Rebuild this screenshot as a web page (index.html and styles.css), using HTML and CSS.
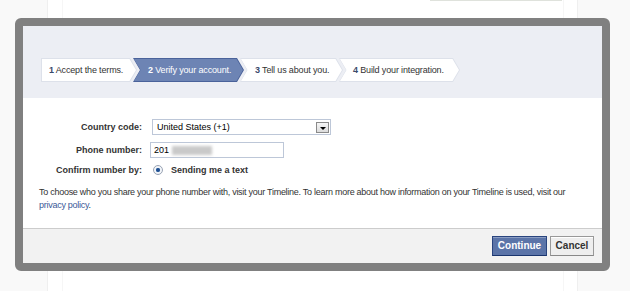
FILE: index.html
```html
<!DOCTYPE html>
<html lang="en">
<head>
<meta charset="utf-8">
<title>Verify your account</title>
<link rel="stylesheet" href="styles.css">
</head>
<body>
<div class="page">
  <div class="topbar"><span class="topbox"></span></div>
  <div class="dialog">
    <div class="dlg-head">
      <ol class="steps">
        <li class="step step-1"><span class="step-text"><b>1</b> Accept the terms.</span></li>
        <li class="step step-2 active"><span class="step-text"><b>2</b> Verify your account.</span></li>
        <li class="step step-3"><span class="step-text"><b>3</b> Tell us about you.</span></li>
        <li class="step step-4"><span class="step-text"><b>4</b> Build your integration.</span></li>
      </ol>
    </div>
    <div class="dlg-body">
      <div class="form">
        <label class="lbl">Country code:</label>
        <div class="ctl"><div class="select"><span class="select-val">United States (+1)</span><span class="select-btn"><span class="tri"></span></span></div></div>
        <label class="lbl">Phone number:</label>
        <div class="ctl"><div class="input">201<span class="blur"></span></div></div>
        <label class="lbl">Confirm number by:</label>
        <div class="ctl"><span class="radio"><span class="radio-dot"></span></span><span class="radio-lbl">Sending me a text</span></div>
      </div>
      <p class="note">To choose who you share your phone number with, visit your Timeline. To learn more about how information on your Timeline is used, visit our <a class="link" href="#">privacy policy</a>.</p>
    </div>
    <div class="dlg-foot">
      <button class="btn btn-primary">Continue</button>
      <button class="btn btn-cancel">Cancel</button>
    </div>
  </div>
</div>
</body>
</html>
```

FILE: styles.css
```css
html, body {
  margin: 0;
  padding: 0;
}
body {
  width: 630px;
  height: 291px;
  overflow: hidden;
  font-family: "Liberation Sans", Arial, sans-serif;
  font-size: 9px;
  color: #333;
  background:
    linear-gradient(to right, transparent 47px, #efefef 47px, #efefef 48px, transparent 48px, transparent 62px, #f6f6f6 62px, #f6f6f6 63px, transparent 63px, transparent 563px, #f6f6f6 563px, #f6f6f6 564px, transparent 564px, transparent 577px, #efefef 577px, #efefef 578px, transparent 578px),
    linear-gradient(to right, #f9f9f9 47px, #ffffff 47px, #ffffff 578px, #f9f9f9 578px);
}
.page {
  display: flex;
  flex-direction: column;
}
.topbar {
  height: 2px;
  display: flex;
  padding-left: 430px;
}
.topbox {
  width: 132px;
  height: 1px;
  background: #dfe2dc;
}
.dialog {
  margin: 16px 0 0 15px;
  width: 579px;
  border: 8px solid #808080;
  border-radius: 6px;
  display: flex;
  flex-direction: column;
  background: #fff;
}
.dlg-head {
  background: #eceef4;
  height: 72px;
  box-sizing: border-box;
  padding: 32px 0 0 18px;
}
.steps {
  list-style: none;
  margin: 0;
  padding: 0;
  display: flex;
}
.step {
  position: relative;
  height: 24px;
  display: flex;
  align-items: center;
  background: #dde1ea;
  clip-path: polygon(0 0, calc(100% - 7px) 0, 100% 50%, calc(100% - 7px) 100%, 0 100%, 7px 50%);
  margin-left: -4px;
  box-sizing: border-box;
  letter-spacing: -0.15px;
}
.step::before {
  content: "";
  position: absolute;
  inset: 1px 1px;
  background: #fff;
  clip-path: polygon(0 0, calc(100% - 6.5px) 0, 100% 50%, calc(100% - 6.5px) 100%, 0 100%, 6.5px 50%);
}
.step-text {
  position: relative;
  white-space: nowrap;
}
.step b {
  color: #3b4a6b;
}
.step-1 {
  margin-left: 0;
  width: 96px;
  padding-left: 8px;
  clip-path: polygon(0 0, calc(100% - 7px) 0, 100% 50%, calc(100% - 7px) 100%, 0 100%);
}
.step-1::before {
  clip-path: polygon(0 0, calc(100% - 6.5px) 0, 100% 50%, calc(100% - 6.5px) 100%, 0 100%);
}
.step-2 { width: 111px; padding-left: 15px; }
.step-3 { width: 103px; padding-left: 15px; }
.step-4 { width: 121px; padding-left: 14px; }
.step.active {
  background: #4a629a;
}
.step.active::before {
  background: #6d84b4;
}
.step.active .step-text,
.step.active b {
  color: #fff;
}
.dlg-body {
  padding: 21px 12px 16px 16px;
  display: flex;
  flex-direction: column;
}
.form {
  display: grid;
  grid-template-columns: 103px auto;
  column-gap: 8px;
  row-gap: 7px;
  align-items: center;
}
.lbl {
  font-weight: bold;
  text-align: right;
  color: #333;
  white-space: nowrap;
}
.ctl {
  display: flex;
  align-items: center;
}
.select {
  margin-left: 2px;
  width: 179px;
  height: 16px;
  box-sizing: border-box;
  border: 1px solid #bdc7d8;
  display: flex;
  align-items: center;
  justify-content: space-between;
  padding: 0 1px 0 4px;
  color: #000;
}
.select-btn {
  width: 13px;
  height: 11px;
  box-sizing: border-box;
  border: 1px solid #8a8a8a;
  background: linear-gradient(#f6f6f6, #dcdcdc);
  display: flex;
  align-items: center;
  justify-content: center;
}
.tri {
  width: 0;
  height: 0;
  border-left: 3px solid transparent;
  border-right: 3px solid transparent;
  border-top: 3px solid #000;
  margin-top: 2px;
}
.input {
  width: 134px;
  height: 16px;
  box-sizing: border-box;
  border: 1px solid #bdc7d8;
  display: flex;
  align-items: center;
  padding-left: 3px;
  color: #000;
}
.blur {
  display: inline-block;
  width: 40px;
  height: 9px;
  margin-left: 3px;
  background: #c9c9c9;
  filter: blur(1.5px);
}
.radio {
  width: 10px;
  height: 10px;
  box-sizing: border-box;
  border-radius: 50%;
  border: 1px solid #9aa4b5;
  background: radial-gradient(circle, #fff 40%, #dfe4ec 100%);
  display: flex;
  align-items: center;
  justify-content: center;
  margin-left: 3px;
}
.radio-dot {
  width: 4px;
  height: 4px;
  border-radius: 50%;
  background: #1f4f8f;
  box-shadow: 0 0 1px #4f86c6;
}
.radio-lbl {
  margin-left: 8px;
  font-weight: bold;
  color: #333;
}
.note {
  margin: 11px 0 0 0;
  line-height: 13px;
  color: #333;
  letter-spacing: -0.27px;
}
.link {
  color: #3b5998;
  text-decoration: none;
}
.dlg-foot {
  border-top: 1px solid #cccccc;
  background: #f2f2f2;
  height: 35px;
  box-sizing: border-box;
  display: flex;
  justify-content: flex-end;
  align-items: center;
  gap: 3px;
  padding: 0 8px 1px 0;
}
.btn {
  font-family: "Liberation Sans", Arial, sans-serif;
  font-size: 10px;
  font-weight: bold;
  height: 20px;
  box-sizing: border-box;
  padding: 0;
  margin: 0;
  cursor: pointer;
}
.btn-primary {
  width: 55px;
  background: #5b74a8;
  border: 1px solid #29447e;
  border-bottom-color: #1a356e;
  color: #fff;
  box-shadow: inset 0 1px 0 #8a9cc2;
}
.btn-cancel {
  width: 44px;
  background: #eeeeee;
  border: 1px solid #999999;
  border-bottom-color: #888;
  color: #333;
  box-shadow: inset 0 1px 0 #fff;
}
```
